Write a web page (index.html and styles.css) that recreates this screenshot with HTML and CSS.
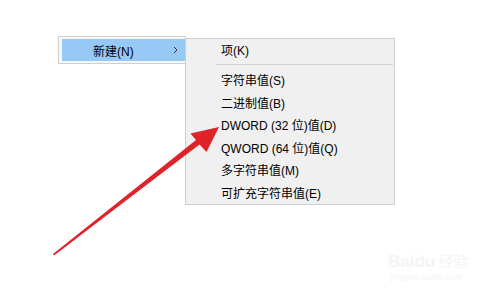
FILE: index.html
```html
<!DOCTYPE html>
<html>
<head>
<meta charset="utf-8">
<title>新建</title>
<link rel="stylesheet" href="styles.css">
</head>
<body>
<div class="desk">
  <div class="menu main-menu">
    <div class="item active">
      <span class="label">新建(N)</span>
      <svg class="chev" width="5" height="8" viewBox="0 0 5 8"><path d="M1 1 L4 4 L1 7" fill="none" stroke="#333" stroke-width="1"/></svg>
    </div>
  </div>
  <div class="menu sub-menu">
    <div class="item">项(K)</div>
    <div class="sep"></div>
    <div class="item">字符串值(S)</div>
    <div class="item">二进制值(B)</div>
    <div class="item">DWORD (32 位)值(D)</div>
    <div class="item">QWORD (64 位)值(Q)</div>
    <div class="item">多字符串值(M)</div>
    <div class="item">可扩充字符串值(E)</div>
  </div>
  <svg class="pointer" width="502" height="298" viewBox="0 0 502 298">
    <path d="M53 254 L54 255.5 L199.5 144.5 L206.5 152 L219 127 L190.5 133.5 L196 140 Z" fill="#e0222b"/>
  </svg>
  <div class="mark"><span class="bai">Bai<b>du</b></span> <span class="jy">经验</span><div class="url">jingyan.baidu.com</div></div>
</div>
</body>
</html>
```
FILE: styles.css
```css
body {
  margin: 0;
  padding: 0;
  background: #fff;
  font-family: "Liberation Sans", "Noto Sans CJK SC", sans-serif;
  font-size: 12px;
  color: #000;
}
.desk {
  position: relative;
  width: 502px;
  height: 298px;
  overflow: hidden;
  display: flex;
  align-items: flex-start;
  padding: 36px 0 0 58px;
  box-sizing: border-box;
}
.menu {
  border: 1px solid #cfcfcf;
  box-sizing: border-box;
}
.main-menu {
  width: 128px;
  height: 28px;
  padding: 2px 0 2px 3px;
  background: #f7f7f7;
}
.main-menu .item {
  height: 22px;
  display: flex;
  align-items: center;
  padding-left: 31px;
  background: #97c9f6;
}
.main-menu .label {
  flex: 1;
}
.main-menu .chev {
  margin-right: 7px;
}
.sub-menu {
  margin: 2px 0 0 -1px;
  width: 210px;
  height: 167px;
  padding: 1px 1px 0 1px;
  background: #f0f0f0;
}
.sub-menu .item {
  height: 22.5px;
  line-height: 22.5px;
  padding-left: 34px;
  white-space: nowrap;
}
.sub-menu .item:first-child {
  height: 22px;
  line-height: 22px;
}
.sep {
  height: 6px;
  margin-left: 29px;
}
.sep::after {
  content: "";
  display: block;
  height: 1px;
  background: #d2d2d2;
  margin-top: 2px;
}
.pointer {
  position: absolute;
  left: 0;
  top: 0;
}
.mark {
  position: absolute;
  left: 388px;
  top: 250px;
  color: #f4f4f4;
}
.mark .bai {
  font-size: 17px;
  font-weight: bold;
}
.mark .jy {
  font-size: 15px;
}
.mark .url {
  font-size: 9px;
  margin-left: 2px;
}
```
